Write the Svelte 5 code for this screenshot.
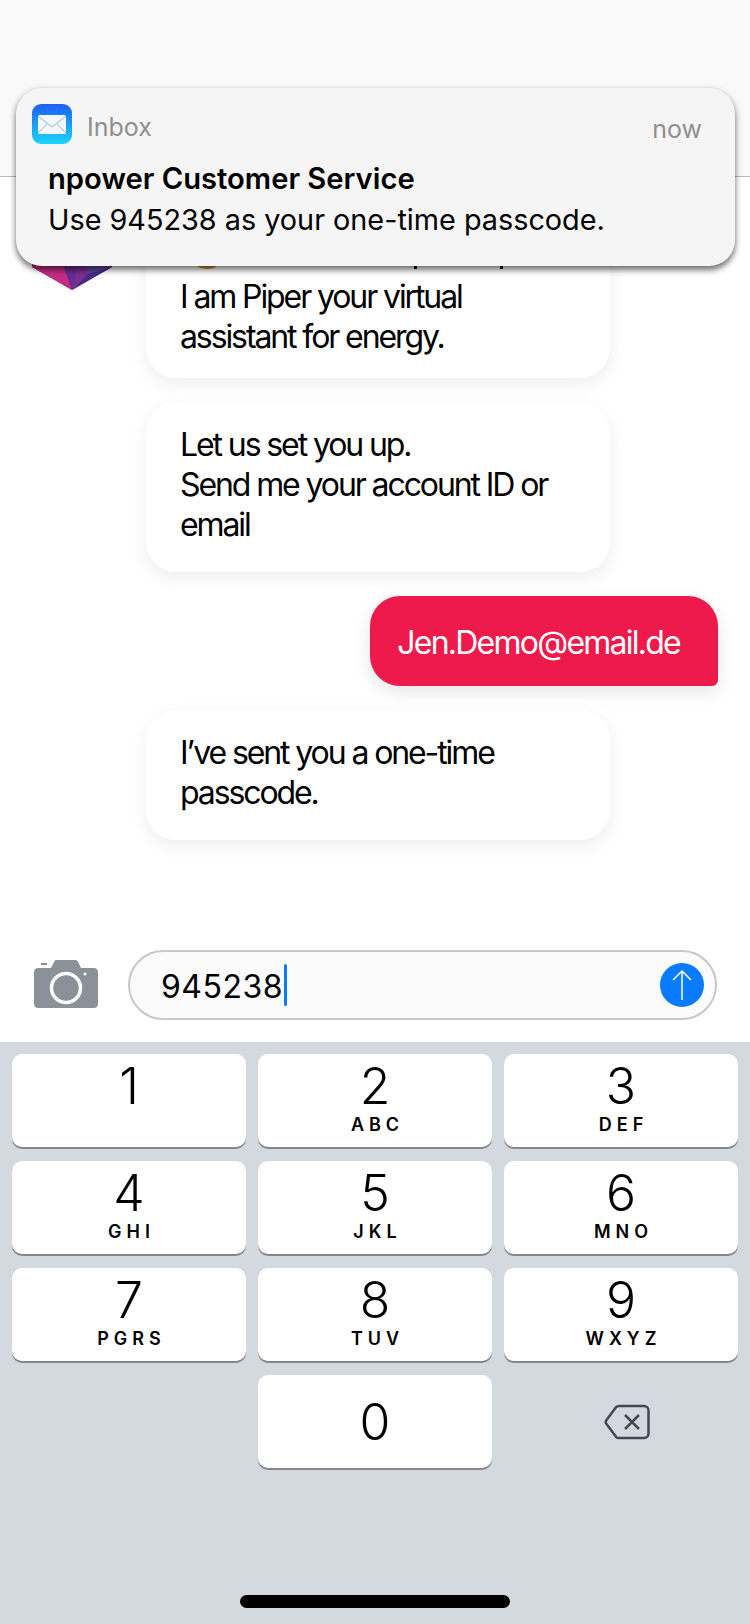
<script>
  // Keypad rows
  const keys = [
    { n: '1', l: '' },
    { n: '2', l: 'ABC' },
    { n: '3', l: 'DEF' },
    { n: '4', l: 'GHI' },
    { n: '5', l: 'JKL' },
    { n: '6', l: 'MNO' },
    { n: '7', l: 'PGRS' },
    { n: '8', l: 'TUV' },
    { n: '9', l: 'WXYZ' }
  ];
</script>

<div class="screen">
  <header class="topbar"></header>

  <main class="messages">
    <div class="row">
      <svg class="avatar" width="80" height="84" viewBox="0 0 80 84">
        <polygon points="0,20 40,0 80,20 80,61 40,84 0,61" fill="#7a2f8f" />
        <polygon points="0,50 28,50 40,84 0,61" fill="#c42c84" />
        <polygon points="28,50 48,50 40,84" fill="#6a2a92" />
        <polygon points="48,50 80,50 80,61 60,72" fill="#5d469c" />
        <polygon points="56,68 80,61 40,84" fill="#4b2a86" />
      </svg>
      <div class="bubble first">
        <!-- first line is covered by the notification, only its lower edge shows -->
        <div class="covered">
          <span class="emoji"></span>
          <span class="tail tail-p"></span>
          <span class="tail tail-comma"></span>
        </div>
        I am Piper your virtual<br />
        assistant for energy.
      </div>
    </div>
    <div class="bubble indented">
      Let us set you up.<br />
      Send me your account ID or<br />
      email
    </div>
    <div class="bubble sent">Jen.Demo@email.de</div>
    <div class="bubble indented">
      I’ve sent you a one-time<br />
      passcode.
    </div>
  </main>

  <section class="composer">
    <svg class="camera" width="64" height="48" viewBox="0 0 64 48">
      <path d="M7 3h6v2H7zM22 0h19c1.500 0 2.500.7 3.200 2L47 8h13c2.300 0 4 1.700 4 4v32c0 2.300-1.700 4-4 4H4c-2.300 0-4-1.700-4-4V12c0-2.300 1.700-4 4-4h13l3-6c.6-1.300 1-2 2-2z" fill="#8a9199" />
      <circle cx="32" cy="28" r="14.500" fill="none" stroke="#fff" stroke-width="3.500" />
      <circle cx="51" cy="14" r="1.500" fill="#fff" />
    </svg>
    <div class="field">
      <span class="value">945238</span><span class="caret"></span>
      <span class="send">
        <svg width="24" height="32" viewBox="0 0 24 32">
          <path d="M12 31V2M3 11l9-9 9 9" fill="none" stroke="#fff" stroke-width="1.500" />
        </svg>
      </span>
    </div>
  </section>

  <section class="keyboard">
    <div class="keys">
      {#each keys as key}
        <div class="key">
          <span class="digit">{key.n}</span>
          <span class="letters">{key.l}</span>
        </div>
      {/each}
      <div class="blank"></div>
      <div class="key zero"><span class="digit">0</span></div>
      <div class="blank del">
        <svg width="46" height="36" viewBox="0 0 46 36">
          <path d="M15 2h25c2.500 0 4.500 2 4.500 4.500v23c0 2.500-2 4.500-4.500 4.500H15c-1.200 0-2.200-.4-3-1.200L2.500 20c-1-1.200-1-2.800 0-4L12 3.200C12.800 2.400 13.800 2 15 2z" fill="none" stroke="#44474f" stroke-width="2.500" stroke-linejoin="round" />
          <path d="M21 11l14 14M35 11L21 25" fill="none" stroke="#44474f" stroke-width="2.500" />
        </svg>
      </div>
    </div>
    <div class="homebar"></div>
  </section>

  <aside class="notification">
    <div class="notif-head">
      <svg class="mail" width="40" height="40" viewBox="0 0 40 40">
        <defs>
          <linearGradient id="mailbg" x1="0" y1="0" x2="0" y2="1">
            <stop offset="0" stop-color="#1e5ff0" />
            <stop offset="1" stop-color="#1ad6fd" />
          </linearGradient>
        </defs>
        <rect width="40" height="40" rx="9" fill="url(#mailbg)" />
        <rect x="6" y="11" width="28" height="19" rx="1.500" fill="#f4f8fd" />
        <path d="M6 12l14 11 14-11M6 29l10-10M34 29L24 19" fill="none" stroke="#8fb7e8" stroke-width="1" />
      </svg>
      <span class="app">Inbox</span>
      <span class="time">now</span>
    </div>
    <div class="title">npower Customer Service</div>
    <div class="body">Use 945238 as your one-time passcode.</div>
  </aside>
</div>

<style>
  :global(body) {
    margin: 0;
    background: #fff;
  }

  .screen {
    position: relative;
    width: 750px;
    height: 1624px;
    display: flex;
    flex-direction: column;
    overflow: hidden;
    font-family: Inter, "Liberation Sans", sans-serif;
    color: #000;
  }

  .topbar {
    height: 177px;
    flex: none;
    background: #f9f9f9;
    border-bottom: 1px solid #b9b9b9;
    box-sizing: border-box;
  }

  .messages {
    flex: 1;
    display: flex;
    flex-direction: column;
    gap: 24px;
    padding: 35px 32px 0 32px;
  }

  .row {
    display: flex;
    align-items: flex-start;
    gap: 34px;
  }

  .avatar {
    flex: none;
    margin-top: -6px;
  }

  .bubble {
    box-sizing: border-box;
    width: 464px;
    padding: 23px 20px 27px 34px;
    background: #fff;
    border-radius: 30px;
    box-shadow: 0 6px 18px rgba(0, 0, 0, 0.07);
    font-size: 32px;
    line-height: 40px;
    letter-spacing: -2.1px;
    white-space: nowrap;
  }

  .first {
    padding-top: 19px;
    padding-bottom: 21px;
  }

  .covered {
    display: flex;
    align-items: flex-end;
    box-sizing: border-box;
    height: 40px;
    padding-bottom: 2px;
    margin-bottom: 6px;
  }

  .emoji {
    flex: none;
    width: 30px;
    height: 24px;
    margin-left: 12px;
    border-radius: 50%;
    background: #c8922a;
  }

  .tail {
    flex: none;
    width: 3px;
    height: 10px;
    background: #000;
  }

  .tail-p {
    margin-left: 192px;
  }

  .tail-comma {
    margin-left: 83px;
  }

  .indented {
    margin-left: 114px;
  }

  .sent {
    align-self: flex-end;
    width: auto;
    padding: 27px 38px 23px 27px;
    background: #ee1a4b;
    color: #fff;
    border-radius: 30px 30px 6px 30px;
    box-shadow: 0 6px 18px rgba(0, 0, 0, 0.1);
    letter-spacing: -1.75px;
  }

  .composer {
    flex: none;
    height: 92px;
    display: flex;
    align-items: flex-start;
    gap: 30px;
    padding: 0 33px 0 34px;
  }

  .camera {
    flex: none;
    margin-top: 10px;
  }

  .field {
    flex: 1;
    box-sizing: border-box;
    height: 70px;
    display: flex;
    align-items: center;
    padding: 0 11px 0 31px;
    background: #fbfbfb;
    border: 2px solid #c8c8c8;
    border-radius: 35px;
  }

  .value {
    font-size: 32px;
    letter-spacing: 0.5px;
    padding-top: 2px;
  }

  .caret {
    width: 3px;
    height: 42px;
    margin-left: 1px;
    border-radius: 2px;
    background: #0a7aff;
  }

  .send {
    margin-left: auto;
    width: 44px;
    height: 44px;
    display: flex;
    align-items: center;
    justify-content: center;
    border-radius: 50%;
    background: #0a7aff;
  }

  .keyboard {
    flex: none;
    position: relative;
    height: 582px;
    box-sizing: border-box;
    padding: 12px 12px 0;
    background: #d4d8df;
  }

  .keys {
    display: grid;
    grid-template-columns: repeat(3, 234px);
    grid-auto-rows: 93px;
    column-gap: 12px;
    row-gap: 14px;
  }

  .key {
    display: flex;
    flex-direction: column;
    align-items: center;
    background: #fff;
    border-radius: 10px;
    box-shadow: 0 2px 0 #85878b;
  }

  .zero {
    grid-column: 2;
    justify-content: center;
  }

  .zero .digit {
    margin-top: 0;
  }

  .del {
    display: flex;
    align-items: center;
    justify-content: center;
    padding-left: 11px;
  }

  .digit {
    margin-top: 4px;
    font-size: 50px;
    line-height: 56px;
    font-weight: 300;
  }

  .letters {
    font-size: 18px;
    line-height: 21px;
    font-weight: 600;
    letter-spacing: 5px;
    margin-right: -5px;
  }

  .homebar {
    position: absolute;
    left: 240px;
    bottom: 16px;
    width: 270px;
    height: 13px;
    border-radius: 7px;
    background: #000;
  }

  .notification {
    position: absolute;
    left: 16px;
    top: 88px;
    width: 719px;
    height: 178px;
    box-sizing: border-box;
    padding: 16px 33px 0 16px;
    background: #f6f5f5;
    border-radius: 26px;
    box-shadow: 0 4px 6px rgba(0, 0, 0, 0.55), 0 0 6px rgba(0, 0, 0, 0.08);
  }

  .notif-head {
    display: flex;
    align-items: center;
    gap: 15px;
    height: 40px;
    font-size: 25px;
    color: #8f8f8f;
  }

  .mail {
    flex: none;
  }

  .app {
    padding-top: 6px;
  }

  .time {
    margin-left: auto;
    padding-top: 10px;
  }

  .title {
    margin: 16px 0 0 16px;
    font-size: 29.200px;
    line-height: 38px;
    font-weight: 600;
  }

  .body {
    margin: 3px 0 0 16px;
    font-size: 28.800px;
    line-height: 38px;
  }
</style>
